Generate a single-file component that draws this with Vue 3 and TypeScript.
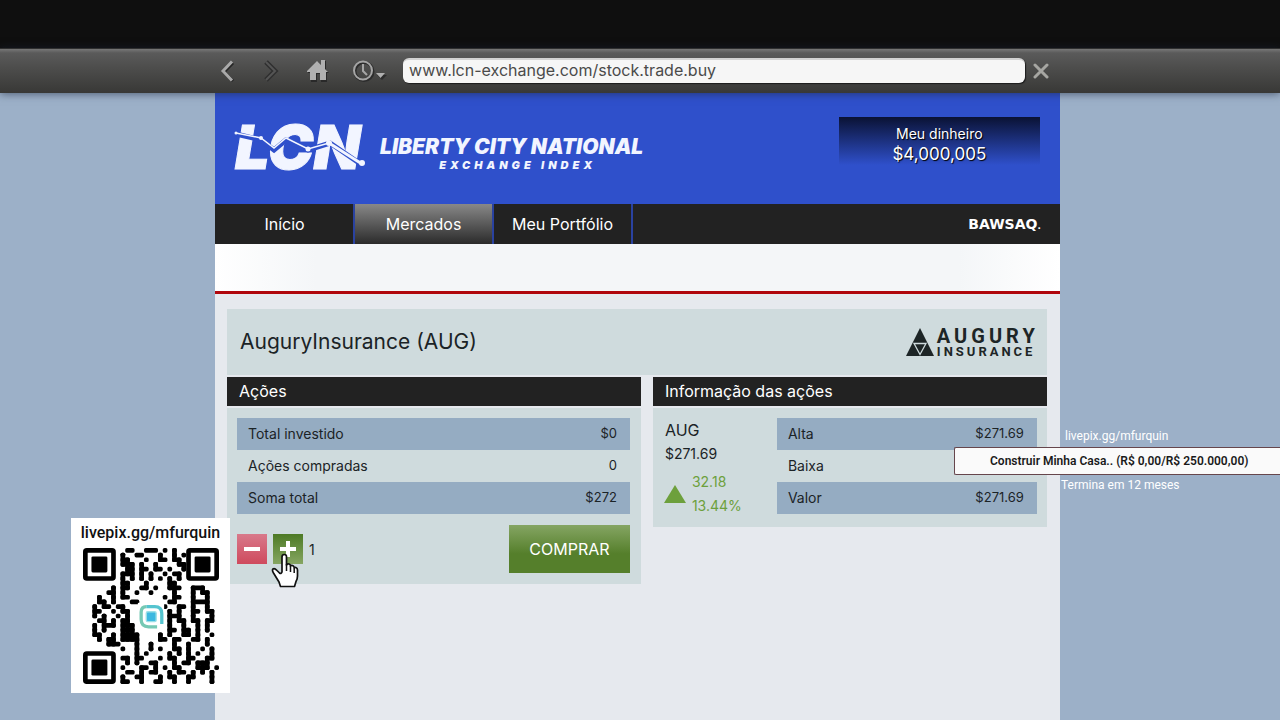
<script setup lang="ts">
import { computed, ref } from 'vue'

interface Row {
  label: string
  value: string
}

const address = ref('www.lcn-exchange.com/stock.trade.buy')
const quantity = ref(1)

const tabs = [
  { name: 'Início', active: false },
  { name: 'Mercados', active: true },
  { name: 'Meu Portfólio', active: false },
]

const holdings: Row[] = [
  { label: 'Total investido', value: '$0' },
  { label: 'Ações compradas', value: '0' },
  { label: 'Soma total', value: '$272' },
]

const quotes: Row[] = [
  { label: 'Alta', value: '$271.69' },
  { label: 'Baixa', value: '' },
  { label: 'Valor', value: '$271.69' },
]

const qrRows = [
  '.........##..###.#.#.........',
  '........#..##...#..#.#.......',
  '........##...#..##.##........',
  '........###.#..#....##.......',
  '.........##.##.##.#..#.......',
  '........###.#.#..#.##........',
  '........#.#.#.#.#.#.#........',
  '........##...#....##.........',
  '......#.##..##.#..###..###...',
  '.....##.#..#..#....#...#.##..',
  '...#..#.##.......#.##..#..#..',
  '...##.#...##......##...####..',
  '..#.##.##........#..##.#..#..',
  '..##..#.##........#.#..##.##.',
  '..#.#..#.#........###..#...#.',
  '...##.#.##........#.##.##.##.',
  '..#.###.###.......#..#..#.#..',
  '..#.#...###.......##.##.#.#..',
  '..##..#.####....#.#..##.#..#.',
  '...#.##.####....##.##..##.#..',
  '.....###...#..#....#..#...#..',
  '........#..#..#.#..##.#..#.#.',
  '...........#.#....#.#.#.#..#.',
  '........##.##...#.##..##..##.',
  '.........#.#..##...#.##.###..',
  '........#...##.#.#.##...###.#',
  '.........##.#.##..#.##.#.#.#.',
  '........#..##...#.##..##...#.',
  '........##..#..##..#..#....#.',
]

const qrRuns = computed(() => {
  const across = qrRows.flatMap((row, y) =>
    [...row.matchAll(/#+/g)].map((m) => ({ x: m.index ?? 0, y, w: m[0].length, h: 1 })),
  )
  const down = qrRows.flatMap((_, x) => {
    const column = qrRows.map((row) => row[x]).join('')
    return [...column.matchAll(/##+/g)].map((m) => ({ x, y: m.index ?? 0, w: 1, h: m[0].length }))
  })
  return [...across, ...down]
})
const finders = [
  { x: 0, y: 0 },
  { x: 22, y: 0 },
  { x: 0, y: 22 },
]
</script>

<template>
  <div class="screen">
    <div class="letterbox"></div>

    <header class="toolbar">
      <div class="tools">
        <button type="button" aria-label="Voltar">
          <svg width="20" height="28" viewBox="0 0 20 28"><path d="M16 6 7 15l9 9" fill="none" stroke="#252525" stroke-width="3" /><path d="M15 4.500 6 14l9 9.500" fill="none" stroke="#a9a9a9" stroke-width="3" /></svg>
        </button>
        <button type="button" aria-label="Avançar">
          <svg width="20" height="28" viewBox="0 0 20 28"><path d="m5 5 9 9-9 9" fill="none" stroke="#303030" stroke-width="5" /><path d="m5 5 9 9-9 9" fill="none" stroke="#555" stroke-width="2" /></svg>
        </button>
        <button type="button" aria-label="Página inicial">
          <svg width="24" height="26" viewBox="0 0 24 26"><path d="M3 14 13 4l4 4V3h4v9l3 3h-2v9h-6v-8h-4v8H6v-9H3z" fill="#292929" /><path d="M2 13 12 3l4 4V2h4v9l3 3h-2v8h-6v-7h-4v7H5v-8H2z" fill="#b0b0b0" /></svg>
        </button>
        <button type="button" aria-label="Histórico">
          <svg width="36" height="26" viewBox="0 0 36 26"><circle cx="11" cy="13.500" r="9" fill="none" stroke="#2c2c2c" stroke-width="3" /><circle cx="10" cy="12.500" r="9" fill="none" stroke="#a5a5a5" stroke-width="2" /><path d="M10 6v7l4 4" fill="none" stroke="#a5a5a5" stroke-width="2" /><path d="M24 17h10l-5 5z" fill="#2c2c2c" /><path d="M23 15h9l-4.500 5z" fill="#b0b0b0" /></svg>
        </button>
      </div>
      <input v-model="address" class="address" type="text" aria-label="Endereço" />
      <button type="button" class="close" aria-label="Fechar">
        <svg width="16" height="16" viewBox="0 0 16 16"><path d="m2 2 12 12M14 2 2 14" fill="none" stroke="#a6a6a2" stroke-width="3" stroke-linecap="round" /></svg>
      </button>
    </header>

    <main class="page">
      <div class="banner">
        <div class="brand">
          <svg class="lcn" width="132" height="50" viewBox="0 0 132 50" role="img" aria-label="LCN">
            <text x="1" y="46" class="lcn-text">LCN</text>
            <path d="M2 11 27 17 40 27 52 17 74 27 96 20 128 42" fill="none" stroke="#2f50cb" stroke-width="5" />
            <path d="M2 10 27 15 40 25 52 15 74 26 95 20" fill="none" stroke="#f2f5ff" stroke-width="1.500" />
            <path d="M95 20 128 41" fill="none" stroke="#f2f5ff" stroke-width="3" />
            <g fill="#f2f5ff"><circle cx="2" cy="10" r="1.500" /><circle cx="27" cy="15" r="2" /><circle cx="74" cy="26" r="2.500" /><circle cx="95" cy="20" r="3" /><circle cx="128" cy="40" r="3" /></g>
          </svg>
          <div class="brand-words">
            <span class="brand-name">LIBERTY CITY NATIONAL</span>
            <span class="brand-sub">EXCHANGE INDEX</span>
          </div>
        </div>
        <div class="money">
          <span>Meu dinheiro</span>
          <strong>$4,000,005</strong>
        </div>
      </div>

      <nav class="nav">
        <a v-for="tab in tabs" :key="tab.name" href="#" :class="{ active: tab.active }">{{ tab.name }}</a>
        <a href="#" class="bawsaq">BAWSAQ<small>.</small></a>
      </nav>
      <div class="ticker"></div>

      <div class="content">
        <section class="title">
          <h1>AuguryInsurance (AUG)</h1>
          <div class="augury">
            <svg width="28" height="28" viewBox="0 0 28 28"><path d="M14 0 28 28H0z" fill="#1d2526" /><path d="M8 15.500h12L14 26.500z" fill="none" stroke="#cfdbdd" stroke-width="1.300" /></svg>
            <div class="augury-words"><b>AUGURY</b><span>INSURANCE</span></div>
          </div>
        </section>

        <div class="panels">
          <section class="panel">
            <h2>Ações</h2>
            <div class="body">
              <table>
                <tbody>
                  <tr v-for="row in holdings" :key="row.label">
                    <th scope="row">{{ row.label }}</th>
                    <td>{{ row.value }}</td>
                  </tr>
                </tbody>
              </table>
              <div class="actions">
                <button type="button" class="step minus" aria-label="Menos" @click="quantity = Math.max(0, quantity - 1)">
                  <svg width="16" height="16" viewBox="0 0 16 16"><path d="M0 8h16" stroke="#fff" stroke-width="4" /></svg>
                </button>
                <button type="button" class="step plus" aria-label="Mais" @click="quantity++">
                  <svg width="16" height="16" viewBox="0 0 16 16"><path d="M0 8h16M8 0v16" stroke="#fff" stroke-width="4" /></svg>
                  <svg class="hand" width="28" height="36" viewBox="0 0 28 36"><path d="M11 19V4q0-2.500 2.300-2.500T15.500 4v8q1-1.700 2.700-1 1.300.5 1.300 2 1-1 2.500-.3 1 .5 1.200 2 1-.7 2.100 0 1.200.7 1.200 2.300v6q0 3-1.500 5.500L23.500 33.500h-14L8 29 2.500 20q-1.700-3-.5-4 1.500-1.200 4 1.500L8.500 20q1.500 1.200 2.500-1z" fill="#fff" stroke="#111" stroke-width="1.700" stroke-linejoin="round" /><path d="M15.500 11v7M19.500 13v6M23.200 15v5" stroke="#111" stroke-width="1.500" /></svg>
                </button>
                <output>{{ quantity }}</output>
                <button type="button" class="buy">COMPRAR</button>
              </div>
            </div>
          </section>

          <section class="panel">
            <h2>Informação das ações</h2>
            <div class="body info">
              <div class="quote">
                <p>AUG</p>
                <p class="price">$271.69</p>
                <div class="change">
                  <svg width="22" height="18" viewBox="0 0 22 18"><path d="M11 0 22 18H0z" fill="#6da03c" /></svg>
                  <div><p>32.18</p><p>13.44%</p></div>
                </div>
              </div>
              <table>
                <tbody>
                  <tr v-for="row in quotes" :key="row.label">
                    <th scope="row">{{ row.label }}</th>
                    <td>{{ row.value }}</td>
                  </tr>
                </tbody>
              </table>
            </div>
          </section>
        </div>
      </div>
    </main>

    <aside class="qr">
      <span>livepix.gg/mfurquin</span>
      <svg width="136" height="136" viewBox="0 0 29 29" role="img" aria-label="QR">
        <rect v-for="(r, i) in qrRuns" :key="i" :x="r.x" :y="r.y" :width="r.w" :height="r.h" rx="0.350" />
        <g v-for="(f, i) in finders" :key="'f' + i">
          <rect :x="f.x + 0.5" :y="f.y + 0.5" width="6" height="6" rx="0.300" fill="none" stroke="#000" />
          <rect :x="f.x + 1.800" :y="f.y + 1.800" width="3.400" height="3.400" rx="0.300" />
        </g>
        <rect x="11.700" y="11.700" width="5.600" height="5.600" fill="#fff" />
        <path d="M13.500 12.500h1.800q1.500 0 1.500 1.500v2.200" fill="none" stroke="#55c4cf" stroke-width="0.700" />
        <path d="M15.800 16.800H14q-1.600 0-1.600-1.600v-1.500q0-1.200 1.100-1.200" fill="none" stroke="#76c9b4" stroke-width="0.700" />
        <rect x="13.500" y="13.600" width="2.100" height="2.100" rx="0.300" fill="#3db8e0" stroke="#9ce0e6" stroke-width="0.300" />
      </svg>
    </aside>

    <aside class="goal">
      <span class="goal-link">livepix.gg/mfurquin</span>
      <div class="goal-bar">Construir Minha Casa.. (R$ 0,00/R$ 250.000,00)</div>
      <span class="goal-end">Termina em 12 meses</span>
    </aside>
  </div>
</template>

<style>
body {
  margin: 0;
  background: #9cb0c8;
}
</style>

<style scoped>
.screen {
  position: relative;
  display: flex;
  flex-direction: column;
  min-height: 100vh;
  overflow: hidden;
  background: #9cb0c8;
  font-family: Inter, "Liberation Sans", sans-serif;
  color: #1b2326;
}
.screen * {
  box-sizing: border-box;
}
button {
  border: 0;
  padding: 0;
  background: none;
  font: inherit;
}
svg {
  display: block;
}
p,
h1,
h2 {
  margin: 0;
  font-weight: 400;
}
.letterbox {
  height: 48px;
  background: #0f0f0f;
}
.toolbar {
  position: relative;
  z-index: 1;
  height: 45px;
  padding: 0 17.2% 1px 16.8%;
  display: flex;
  align-items: center;
  border-top: 1px solid #303030;
  background: linear-gradient(#777 0, #5a5a5a 4px, #4e4e4d 40%, #383836 100%);
  box-shadow: 0 1px 8px rgba(30, 40, 60, 0.6);
}
.tools {
  display: flex;
  align-items: center;
  gap: 24px;
  width: 188px;
  padding-left: 2px;
  flex: none;
}
.address {
  flex: 1;
  min-width: 0;
  height: 25px;
  padding: 0 6px 3px;
  border: 0;
  border-top: 2px solid #d2d2d2;
  border-radius: 6px;
  background: #f6f6f6;
  box-shadow: 1px 1px 1px #1c1c1c;
  font: 16px/20px Inter, "Liberation Sans", sans-serif;
  color: #4a4a4a;
}
.close {
  margin: 0 11px 0 8px;
}
.page {
  flex: 1;
  width: 66%;
  margin-left: 16.8%;
  background: #e6e9ee;
}
.banner {
  height: 111px;
  padding: 24px 20px 0 19px;
  display: flex;
  justify-content: space-between;
  align-items: flex-start;
  background: #2f50cb;
}
.brand {
  display: flex;
  gap: 14px;
  padding-top: 6px;
  color: #f2f5ff;
}
.lcn {
  overflow: visible;
}
.lcn-text {
  font: italic 900 61px Inter, "Liberation Sans", sans-serif;
  fill: #f2f5ff;
  stroke: #f2f5ff;
  stroke-width: 1px;
}
.brand-words {
  display: flex;
  flex-direction: column;
  align-items: center;
  padding-top: 11px;
  font-style: italic;
  font-weight: 900;
}
.brand-name {
  font-size: 21px;
  line-height: 25px;
}
.brand-sub {
  padding-left: 12px;
  font-size: 11px;
  line-height: 12px;
  letter-spacing: 4px;
}
.money {
  width: 201px;
  height: 48px;
  padding-top: 7px;
  display: flex;
  flex-direction: column;
  align-items: center;
  background: linear-gradient(#0a1234, #2f50cb);
  color: #fff;
  font-size: 14px;
  line-height: 20px;
  text-shadow: 1px 1px 1px #000;
}
.money strong {
  font-size: 17px;
  font-weight: 400;
}
.nav {
  height: 40px;
  padding-left: 1px;
  display: flex;
  background: #222;
}
.nav a {
  width: 139px;
  border-right: 2px solid #2a42a0;
  color: #fff;
  font-size: 16px;
  line-height: 40px;
  text-align: center;
  text-decoration: none;
}
.nav a.active {
  background: linear-gradient(#888, #2b2b2b);
}
.nav a.bawsaq {
  width: auto;
  margin-left: auto;
  padding-right: 19px;
  border: 0;
  font: 700 14px/41px "DejaVu Sans", sans-serif;
}
.bawsaq small {
  font-size: 9px;
}
.ticker {
  height: 50px;
  border-bottom: 3px solid #b0060c;
  background: linear-gradient(90deg, #fff, #f4f6f8 12%, #f4f6f8 88%, #fff);
}
.content {
  padding: 15px 13px 0 12px;
}
.title {
  height: 66px;
  padding: 0 8px 0 13px;
  display: flex;
  align-items: center;
  justify-content: space-between;
  background: #cfdbdd;
}
h1 {
  font-size: 21px;
  line-height: 28px;
}
.augury {
  display: flex;
  align-items: center;
  gap: 3px;
}
.augury-words {
  display: flex;
  flex-direction: column;
  font-family: Roboto, sans-serif;
  color: #1d2526;
}
.augury-words b {
  font-size: 20px;
  line-height: 20px;
  letter-spacing: 4px;
}
.augury-words span {
  font-size: 13px;
  font-weight: 700;
  line-height: 12px;
  letter-spacing: 3px;
}
.panels {
  margin-top: 2px;
  display: grid;
  grid-template-columns: 414fr 394fr;
  gap: 12px;
  align-items: start;
}
h2 {
  padding-left: 12px;
  background: #222;
  color: #fff;
  font-size: 16px;
  line-height: 29px;
}
.body {
  margin-top: 2px;
  padding: 10px 11px 11px 10px;
  background: #cfdbdd;
}
table {
  width: 100%;
  border-collapse: collapse;
  font-size: 14px;
}
tr {
  height: 32px;
}
tr:nth-child(odd) {
  background: #95acc2;
}
th {
  padding: 0 0 2px 11px;
  font-weight: 400;
  text-align: left;
}
td {
  padding: 0 13px 2px 0;
  font-size: 13px;
  text-align: right;
}
.actions {
  margin-top: 11px;
  display: flex;
  align-items: center;
}
.step {
  position: relative;
  width: 30px;
  height: 30px;
  display: grid;
  place-items: center;
  margin-right: 6px;
}
.minus {
  background: linear-gradient(#d8798a, #cf4a5d);
}
.plus {
  background: linear-gradient(#4d7a25, #86a662);
}
.hand {
  position: absolute;
  left: -2px;
  top: 19px;
}
output {
  font-size: 14px;
}
.buy {
  width: 121px;
  height: 48px;
  margin-left: auto;
  background: linear-gradient(#85a563, #557f2b 60%, #557f2b);
  color: #fff;
  font-size: 16px;
}
.info {
  display: grid;
  grid-template-columns: 112px 1fr;
  align-items: start;
  padding: 10px 10px 9px 12px;
}
.quote {
  font-size: 16px;
  line-height: 24px;
}
.quote .price {
  font-size: 14px;
}
.change {
  display: flex;
  align-items: center;
  gap: 6px;
  margin: 4px 0 0 -1px;
  color: #6da03c;
}
.change p {
  font-size: 14px;
}
.qr {
  position: absolute;
  left: 71px;
  top: 518px;
  width: 159px;
  height: 175px;
  display: flex;
  flex-direction: column;
  align-items: center;
  background: #fff;
  color: #111;
  font: 500 16px/30px Roboto, sans-serif;
}
.goal {
  position: absolute;
  right: 0;
  top: 428px;
  width: 326px;
  display: flex;
  flex-direction: column;
  color: #fff;
  font: 400 12px/17px Roboto, sans-serif;
}
.goal-link {
  margin: 0 0 2px 111px;
}
.goal-end {
  margin: 2px 0 0 107px;
}
.goal-bar {
  height: 28px;
  padding-left: 35px;
  border: 1px solid #66464c;
  border-right: 0;
  border-radius: 2px 0 0 2px;
  background: #fafafa;
  color: #1a1a1a;
  font-size: 12px;
  font-weight: 600;
  line-height: 26px;
  white-space: nowrap;
}
</style>
